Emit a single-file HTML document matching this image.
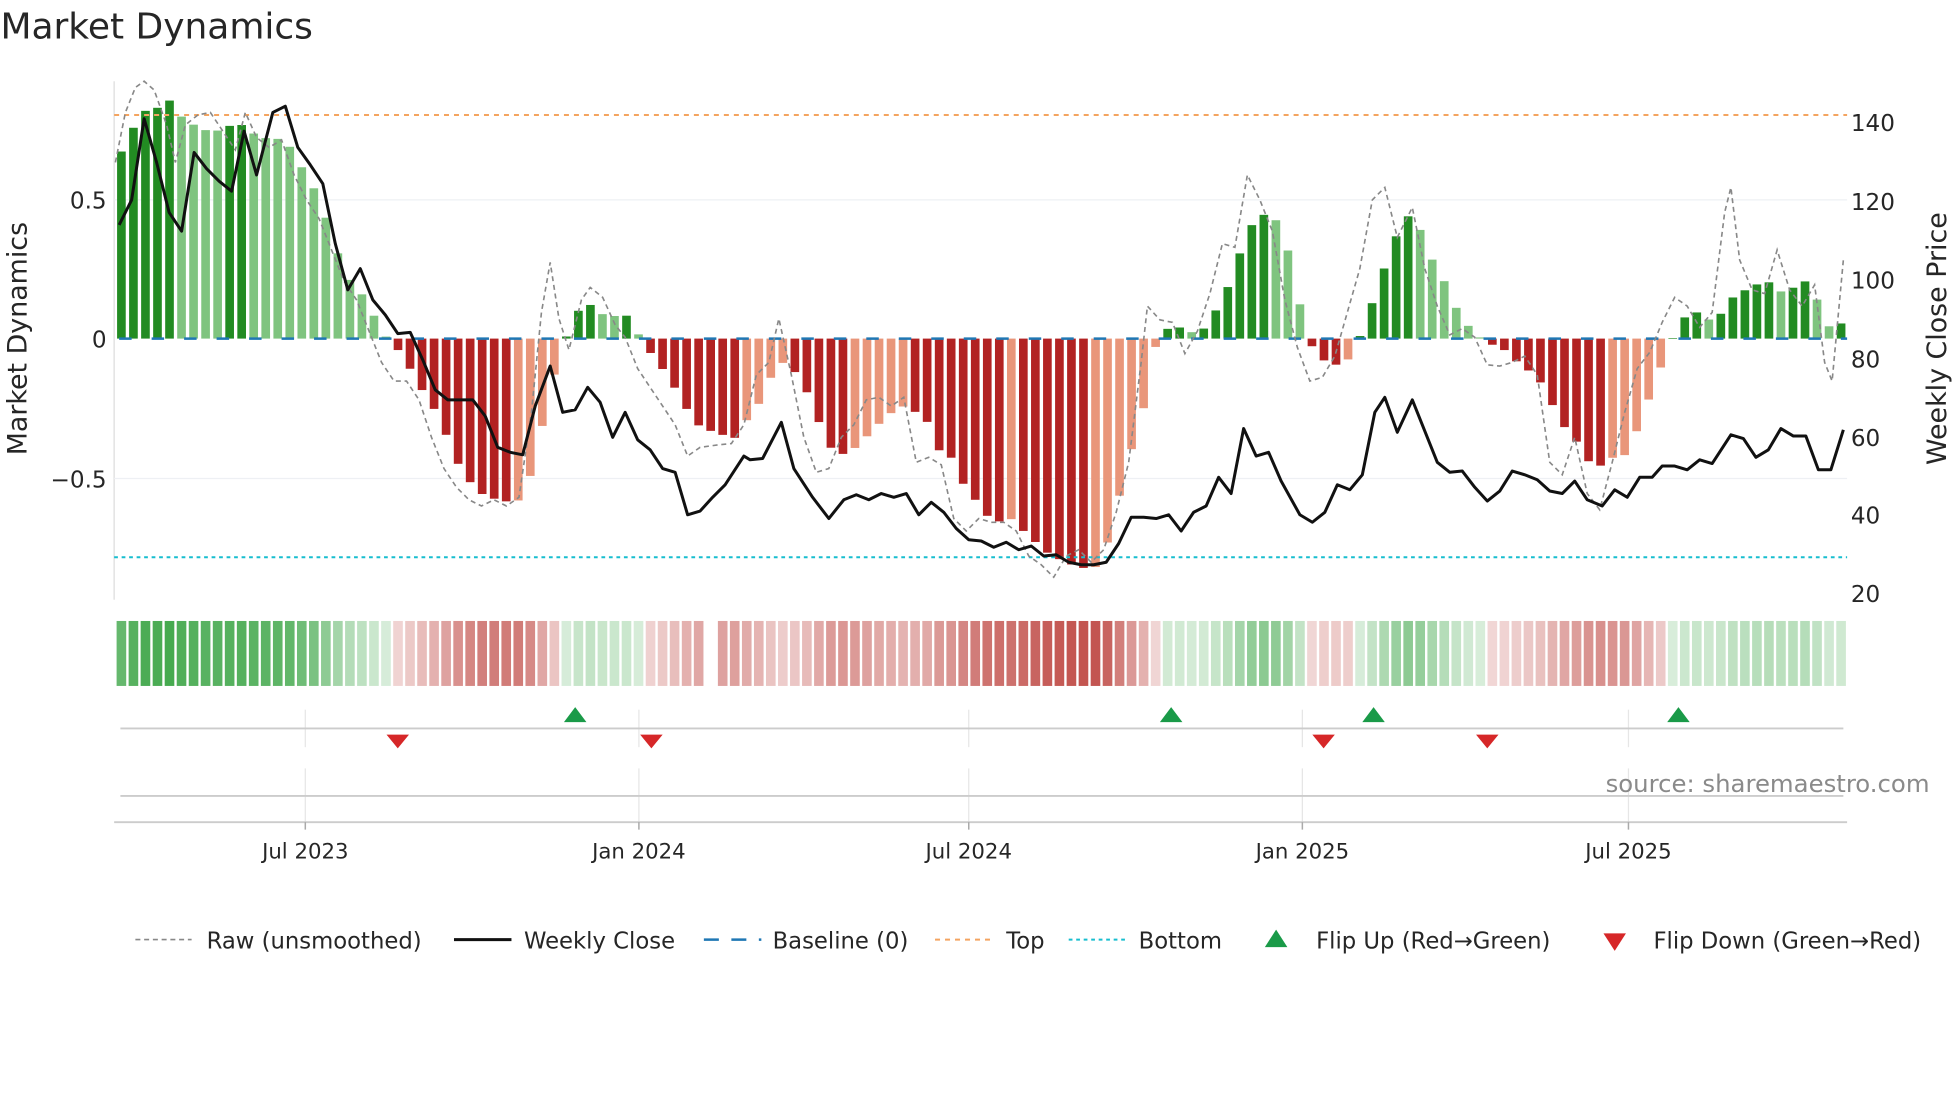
<!DOCTYPE html>
<html><head><meta charset="utf-8"><style>
html,body{margin:0;padding:0;background:#fff;width:1960px;height:1102px;overflow:hidden}
svg{display:block}
text{font-family:"DejaVu Sans","Liberation Sans",sans-serif;fill:#262626}
</style></head><body>
<svg id="s" width="1960" height="1102" viewBox="0 0 1568 882" xmlns="http://www.w3.org/2000/svg">
<rect width="1568" height="882" fill="#fff"/>
<text x="0" y="31" font-size="28.8" fill="#333">Market Dynamics</text>
<line x1="91" y1="65" x2="91" y2="480" stroke="#ddd" stroke-width="1"/>
<line x1="91" y1="160" x2="1478" y2="160" stroke="#eef0f4" stroke-width="1"/>
<line x1="91" y1="383" x2="1478" y2="383" stroke="#eef0f4" stroke-width="1"/>
<g id="bars"></g>
<line x1="91" y1="92" x2="1478" y2="92" stroke="#f4a460" stroke-width="1.6" stroke-dasharray="4,4"/>
<line x1="91" y1="446" x2="1478" y2="446" stroke="#17becf" stroke-width="1.6" stroke-dasharray="3,3"/>
<line x1="95" y1="271" x2="1478" y2="271" stroke="#1f77b4" stroke-width="2" stroke-dasharray="10,16"/>
<polyline id="raw" fill="none" stroke="#888" stroke-width="1.3" stroke-dasharray="4,3"/>
<polyline id="px" fill="none" stroke="#111" stroke-width="2.4" stroke-linejoin="round"/>
<g font-size="18.5" text-anchor="end">
<text x="85" y="167">0.5</text><text x="85" y="278">0</text><text x="85" y="390">−0.5</text>
</g>
<g font-size="18.5">
<text x="1481" y="105">140</text><text x="1481" y="168">120</text><text x="1481" y="231">100</text><text x="1481" y="294">80</text><text x="1481" y="357">60</text><text x="1481" y="419">40</text><text x="1481" y="482">20</text>
</g>
<text transform="translate(21,271) rotate(-90)" font-size="21.5" text-anchor="middle">Market Dynamics</text>
<text transform="translate(1557,271) rotate(-90)" font-size="21.5" text-anchor="middle">Weekly Close Price</text>
<g id="heat"></g>
<g stroke="#e6e6e6" stroke-width="1">
<line x1="244" y1="568" x2="244" y2="598"/><line x1="511" y1="568" x2="511" y2="598"/><line x1="775" y1="568" x2="775" y2="598"/><line x1="1042" y1="568" x2="1042" y2="598"/><line x1="1303" y1="568" x2="1303" y2="598"/>
<line x1="244" y1="615" x2="244" y2="658"/><line x1="511" y1="615" x2="511" y2="658"/><line x1="775" y1="615" x2="775" y2="658"/><line x1="1042" y1="615" x2="1042" y2="658"/><line x1="1303" y1="615" x2="1303" y2="658"/>
</g>
<line x1="96" y1="583" x2="1475" y2="583" stroke="#ccc" stroke-width="1.5"/>
<line x1="96" y1="637" x2="1475" y2="637" stroke="#ccc" stroke-width="1.5"/>
<line x1="91" y1="658" x2="1478" y2="658" stroke="#ccc" stroke-width="1.5"/>
<g stroke="#aaa" stroke-width="1.2"><line x1="244" y1="658" x2="244" y2="664"/><line x1="511" y1="658" x2="511" y2="664"/><line x1="775" y1="658" x2="775" y2="664"/><line x1="1042" y1="658" x2="1042" y2="664"/><line x1="1303" y1="658" x2="1303" y2="664"/></g>
<g id="mk"></g>
<text x="1544" y="634" font-size="19.5" text-anchor="end" style="fill:#8a8a8a">source: sharemaestro.com</text>
<g font-size="17" text-anchor="middle">
<text x="244" y="687">Jul 2023</text><text x="511" y="687">Jan 2024</text><text x="775" y="687">Jul 2024</text><text x="1042" y="687">Jan 2025</text><text x="1303" y="687">Jul 2025</text>
</g>
<g font-size="18.2">
<line x1="108" y1="752" x2="153" y2="752" stroke="#888" stroke-width="1.3" stroke-dasharray="4,3"/>
<text x="165" y="759">Raw (unsmoothed)</text>
<line x1="363" y1="752" x2="409" y2="752" stroke="#111" stroke-width="2.4"/>
<text x="419" y="759">Weekly Close</text>
<line x1="563" y1="752" x2="609" y2="752" stroke="#1f77b4" stroke-width="2" stroke-dasharray="12,10"/>
<text x="618" y="759">Baseline (0)</text>
<line x1="748" y1="752" x2="794" y2="752" stroke="#f4a460" stroke-width="1.6" stroke-dasharray="4,4"/>
<text x="805" y="759">Top</text>
<line x1="855" y1="752" x2="901" y2="752" stroke="#17becf" stroke-width="1.6" stroke-dasharray="3,3"/>
<text x="911" y="759">Bottom</text>
<polygon points="1012,758 1030,758 1021,744" fill="#1a9a48"/>
<text x="1053" y="759">Flip Up (Red→Green)</text>
<polygon points="1283,747 1301,747 1292,761" fill="#d62728"/>
<text x="1323" y="759">Flip Down (Green→Red)</text>
</g>
</svg>
<script>
var NS="http://www.w3.org/2000/svg";
function el(t,a,p){var e=document.createElementNS(NS,t);for(var k in a)e.setAttribute(k,a[k]);p.appendChild(e);return e;}
var kp=[[92,.63],[105,.75],[115,.82],[125,.83],[135,.86],[145,.8],[155,.77],[165,.75],[175,.75],[185,.77],[195,.77],[205,.73],[215,.72],[228,.72],[238,.64],[248,.57],[258,.47],[268,.33],[278,.22],[288,.17],[298,.09],[308,.01],[318,-.04],[328,-.11],[338,-.19],[348,-.26],[358,-.36],[368,-.47],[378,-.53],[388,-.57],[398,-.58],[408,-.59],[418,-.58],[428,-.44],[438,-.22],[448,-.05],[460,.09],[470,.13],[480,.09],[490,.08],[500,.09],[510,.02],[520,-.05],[530,-.11],[540,-.18],[550,-.26],[560,-.32],[580,-.35],[590,-.36],[600,-.27],[610,-.22],[620,-.10],[630,-.08],[640,-.15],[650,-.23],[660,-.37],[670,-.42],[680,-.41],[690,-.37],[700,-.32],[710,-.28],[720,-.24],[730,-.26],[740,-.28],[750,-.40],[760,-.42],[770,-.52],[780,-.58],[790,-.64],[800,-.66],[810,-.65],[820,-.70],[830,-.74],[840,-.78],[850,-.80],[860,-.82],[870,-.83],[880,-.82],[890,-.68],[900,-.48],[915,-.25],[925,-.02],[935,.04],[945,.04],[955,.02],[965,.04],[975,.12],[985,.21],[995,.35],[1005,.44],[1015,.45],[1025,.41],[1035,.24],[1045,.01],[1055,-.07],[1065,-.09],[1075,-.10],[1085,-.03],[1098,.13],[1108,.26],[1118,.38],[1128,.45],[1138,.38],[1148,.26],[1158,.19],[1168,.08],[1178,.03],[1188,-.01],[1198,-.03],[1208,-.05],[1218,-.11],[1228,-.12],[1240,-.22],[1250,-.31],[1260,-.36],[1270,-.44],[1280,-.46],[1290,-.43],[1300,-.42],[1310,-.33],[1320,-.21],[1330,-.09],[1342,.04],[1352,.10],[1362,.09],[1372,.05],[1382,.13],[1392,.17],[1402,.18],[1412,.22],[1422,.17],[1432,.17],[1442,.22],[1452,.16],[1465,.03],[1475,.06]];
function interp(x){if(x<=kp[0][0])return kp[0][1];for(var i=1;i<kp.length;i++){if(x<=kp[i][0]){var a=kp[i-1],b=kp[i];return a[1]+(b[1]-a[1])*(x-a[0])/(b[0]-a[0]);}}return kp[kp.length-1][1];}
var bars=document.getElementById('bars'),heat=document.getElementById('heat');
var N=144,x0=92,x1=1478,sp=(x1-x0)/N,prev=0;
for(var i=0;i<N;i++){var cx=x0+sp*(i+.5),v=interp(cx);
 var dark=(v>=0)?(v>=prev):(v<=prev);prev=v;
 var col=v>=0?(dark?"#228b22":"#7fc47f"):(dark?"#b22222":"#e9967a");
 var y=271-v*222,h=Math.abs(v*222);
 el('rect',{x:cx-sp*0.36,y:Math.min(y,271),width:sp*0.72,height:Math.max(h,0.5),fill:col},bars);
 if(cx>567&&cx<578)continue;
 var a=0.2+0.75*Math.min(1,Math.abs(v)/0.86);
 var hc=v>=0?"rgba(60,165,70,"+a+")":"rgba(190,70,65,"+a+")";
 el('rect',{x:cx-sp*0.4,y:497,width:sp*0.8,height:52,fill:hc},heat);
}
var px=[[95,180],[105,160],[115,95],[125,130],[135,170],[145,185],[155,122],[165,135],[175,145],[185,153],[195,105],[205,140],[218,90],[228,85],[238,118],[248,132],[258,147],[268,195],[278,232],[288,215],[298,240],[308,252],[318,267],[328,266],[338,288],[348,312],[358,320],[368,320],[378,320],[388,333],[398,358],[408,362],[418,364],[428,325],[440,293],[450,330],[460,328],[470,310],[480,322],[490,350],[500,330],[510,352],[520,360],[530,375],[540,378],[550,412],[560,409],[570,398],[580,388],[595,365],[600,368],[610,367],[625,338],[635,375],[650,398],[663,415],[675,400],[685,396],[695,400],[705,395],[715,398],[725,395],[735,412],[745,402],[755,410],[765,423],[775,432],[785,433],[795,438],[805,434],[815,440],[825,437],[835,445],[845,444],[855,450],[865,452],[875,452],[885,450],[895,435],[905,414],[915,414],[925,415],[935,412],[945,425],[955,410],[965,405],[975,382],[985,395],[995,343],[1005,365],[1015,362],[1025,385],[1040,412],[1050,418],[1060,410],[1070,388],[1080,392],[1090,380],[1100,330],[1108,318],[1118,346],[1130,320],[1140,345],[1150,370],[1160,378],[1170,377],[1180,390],[1190,401],[1200,393],[1210,377],[1220,380],[1230,384],[1240,393],[1250,395],[1260,385],[1270,400],[1282,405],[1292,392],[1302,398],[1312,382],[1322,382],[1330,373],[1340,373],[1350,376],[1360,368],[1370,371],[1385,348],[1395,351],[1405,366],[1415,360],[1425,343],[1435,349],[1445,349],[1455,376],[1465,376],[1475,344]];
document.getElementById('px').setAttribute('points',px.map(function(p){return p.join(',')}).join(' '));
var raw=[[92,130],[100,90],[108,70],[115,65],[123,72],[133,100],[140,130],[148,100],[158,92],[168,90],[178,105],[188,120],[196,90],[205,110],[215,118],[225,112],[235,140],[245,160],[255,175],[265,200],[275,225],[285,240],[295,265],[305,290],[315,305],[325,305],[335,320],[345,350],[355,375],[365,390],[375,400],[385,405],[395,400],[405,405],[415,398],[425,330],[433,250],[440,210],[447,255],[455,280],[465,240],[472,230],[482,238],[492,260],[500,270],[510,295],[520,310],[530,325],[540,340],[550,365],[560,358],[575,356],[585,355],[595,340],[605,300],[615,290],[623,255],[633,300],[643,350],[653,378],[663,375],[673,350],[683,340],[693,320],[703,318],[713,325],[723,318],[733,370],[743,366],[753,372],[763,415],[773,425],[783,415],[793,418],[803,418],[813,425],[823,445],[833,452],[843,462],[853,445],[863,440],[873,450],[883,440],[893,410],[903,370],[913,290],[918,245],[928,256],[938,258],[948,283],[958,265],[968,235],[978,195],[988,198],[998,140],[1008,160],[1018,185],[1028,240],[1038,278],[1048,305],[1058,302],[1068,285],[1078,250],[1088,215],[1098,160],[1108,150],[1118,190],[1130,166],[1140,215],[1150,245],[1160,268],[1170,263],[1180,270],[1190,292],[1200,293],[1210,290],[1220,285],[1230,300],[1240,370],[1250,380],[1260,350],[1270,395],[1280,408],[1290,370],[1300,330],[1310,295],[1320,282],[1330,258],[1340,238],[1350,245],[1360,262],[1370,250],[1380,170],[1385,150],[1392,208],[1402,232],[1412,235],[1422,200],[1432,232],[1442,245],[1452,228],[1460,290],[1466,305],[1475,208]];
document.getElementById('raw').setAttribute('points',raw.map(function(p){return p.join(',')}).join(' '));
var mk=document.getElementById('mk');
[460,937,1099,1343].forEach(function(x){el('polygon',{points:(x-9)+',578 '+(x+9)+',578 '+x+',566',fill:'#1a9a48'},mk);});
[318,521,1059,1190].forEach(function(x){el('polygon',{points:(x-9)+',588 '+(x+9)+',588 '+x+',599',fill:'#d62728'},mk);});
</script>
</body></html>
